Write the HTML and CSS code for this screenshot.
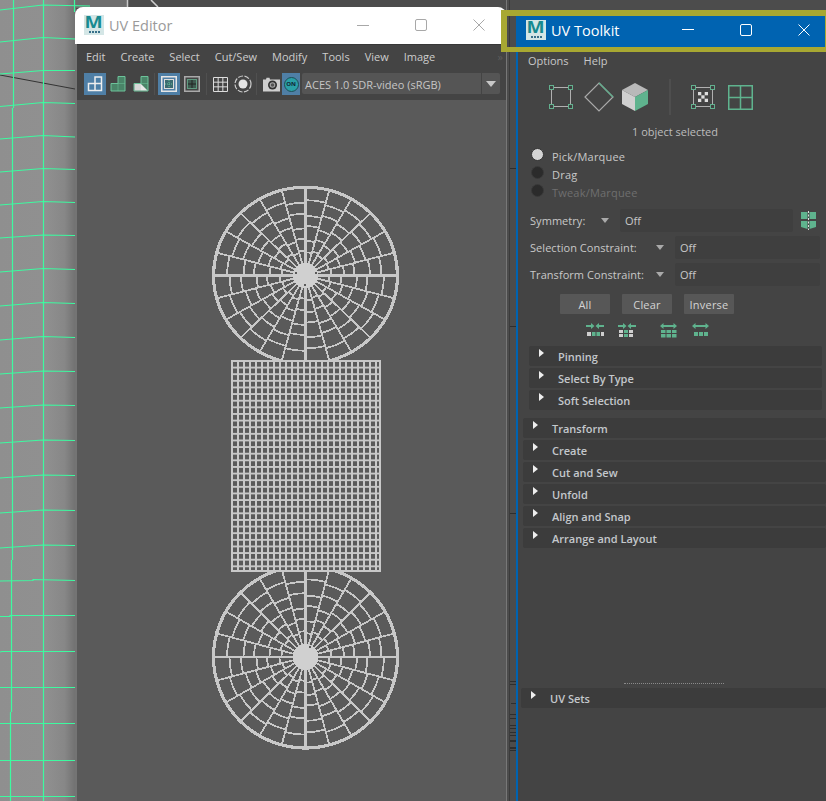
FILE: index.html
```html
<!DOCTYPE html>
<html lang="en">
<head>
<meta charset="utf-8">
<title>UV Editor and UV Toolkit</title>
<link rel="stylesheet" href="styles.css">
</head>
<body>
<div class="desk">
  <svg class="backdrop" width="826" height="801" viewBox="0 0 826 801">
    <defs>
      <linearGradient id="vp" x1="0" x2="1" y1="0" y2="0">
        <stop offset="0" stop-color="#8f8f8f"/><stop offset=".6" stop-color="#909090"/><stop offset=".85" stop-color="#878787"/><stop offset="1" stop-color="#707070"/>
      </linearGradient>
    </defs>
    <rect x="0" y="0" width="76" height="801" fill="url(#vp)"/>
    <rect x="76" y="0" width="52" height="8" fill="#6e6e6e"/>
    <path d="M127.500 0V8" stroke="#c8c8c8" stroke-width="1.500"/>
    <path d="M151 0L158 7" stroke="#d0d0d0" stroke-width="1.500"/>
    <path d="M0 75L75 89" stroke="#333" stroke-width="1"/>
    <g fill="none" stroke="#3dfaa0" stroke-width="1.200">
      <path d="M13.500 0V108M12.500 108V560M11.500 560V712M10.500 712V801M43.500 0V801M74.500 0V12"/>
      <path d="M0 10L43 5L90 6M0 42L43 37.500L75 39M0 74L43 70.500L75 70.500M0 106.500L43 102.500L75 103.500M0 139L43 135.500L75 137M0 172L43 168.500L75 169.500M0 205L43 201.500L75 202.500M0 238L43 235L75 235.500M0 272L43 268.500L75 269.500"/>
      <path d="M0 306L43 302.500L75 303.500M0 340L43 336.500L75 337.500M0 374L43 371L75 371.500M0 408L43 405L75 405.500M0 443L43 440L75 440.500M0 478L43 475L75 475.500M0 513L43 510L75 510.500M0 548L43 545L75 545.500"/>
      <path d="M0 581L33 580.500L33 579.500L75 580.500M0 616.500L10 616.500L10 615.500L75 615.500M0 652L2 651.500L75 651.500M0 687.500H75M0 723.500H75M0 760.500H75M0 796.500H75"/>
    </g>
    <rect x="506" y="0" width="1" height="801" fill="#777"/>
    <rect x="509" y="0" width="1" height="801" fill="#3a3a3a"/>
    <g fill="#2e2e2e">
      <rect x="510" y="168" width="6" height="1"/><rect x="510" y="326" width="6" height="1"/><rect x="510" y="513" width="6" height="1"/>
      <rect x="510" y="681" width="6" height="1"/><rect x="510" y="684" width="6" height="1"/><rect x="511" y="703" width="5" height="1"/><rect x="510" y="714" width="6" height="1"/><rect x="510" y="718" width="6" height="1"/><rect x="510" y="725" width="6" height="1"/><rect x="510" y="728" width="6" height="1"/><rect x="510" y="732" width="6" height="1"/><rect x="510" y="735" width="6" height="1"/><rect x="510" y="740" width="6" height="2"/><rect x="510" y="747" width="6" height="2"/><rect x="510" y="750" width="6" height="1"/>
    </g>
  </svg>

  <section class="win editor">
    <header class="title title-light">
      <div class="logo"><span class="logo-m">M</span><i class="logo-s"></i></div>
      <span class="title-text">UV Editor</span>
      <div class="controls controls-e">
        <svg class="ctl" viewBox="0 0 12 12"><path d="M0 6.500H12"/></svg>
        <svg class="ctl" viewBox="0 0 12 12"><rect x=".5" y=".5" width="11" height="11" rx="1.500"/></svg>
        <svg class="ctl" viewBox="0 0 12 12"><path d="M.5 .5L11.500 11.500M11.500 .5L.5 11.500"/></svg>
      </div>
    </header>
    <div class="ed-body">
      <nav class="ed-menu">
        <span>Edit</span><span>Create</span><span>Select</span><span>Cut/Sew</span><span>Modify</span><span>Tools</span><span>View</span><span>Image</span>
        <span class="more">»</span>
      </nav>
      <div class="ed-tools">
        <div class="tb on">
          <svg width="18" height="18" viewBox="0 0 18 18"><path d="M9 2H15.500V15.500H2.500V8.500H9Z" fill="#4b7ea6" stroke="#eee" stroke-width="1.500"/><path d="M9 8.500H15.500M9 8.500V15.500" stroke="#eee" stroke-width="1.500"/></svg>
        </div>
        <div class="tb">
          <svg width="18" height="18" viewBox="0 0 18 18"><path d="M9 1.500H16V16H2V8.500H9Z" fill="#4a8468" stroke="#6cc39a" stroke-width="1"/><path d="M9 8.500H16M9 8.500V16" stroke="#6cc39a" stroke-opacity=".5"/></svg>
        </div>
        <div class="tb">
          <svg width="18" height="18" viewBox="0 0 18 18"><path d="M9 1.500H16V16H2V8.500H9Z" fill="#4a8468" stroke="#6cc39a" stroke-width="1"/><path d="M9 8.500H16" stroke="#6cc39a" stroke-opacity=".5"/><path d="M2.500 9H9V15.500H2.500Z" fill="#d8d8d8"/><path d="M9 9L15.500 15.500H9Z" fill="#e8e8e8"/></svg>
        </div>
        <span class="sep"></span>
        <div class="tb on">
          <svg width="16" height="16" viewBox="0 0 16 16"><rect x=".75" y=".75" width="14.500" height="14.500" fill="none" stroke="#e6e6e6" stroke-width="1.500"/><rect x="3.500" y="3.500" width="9" height="9" fill="#3c6a70" stroke="#ddd"/><path d="M8 4V12M4 8H12" stroke="#66c39a" stroke-dasharray="1 1"/></svg>
        </div>
        <div class="tb">
          <svg width="16" height="16" viewBox="0 0 16 16"><rect x=".75" y=".75" width="14.500" height="14.500" fill="none" stroke="#aaa" stroke-width="1.500"/><rect x="3.500" y="3.500" width="9" height="9" fill="#3f5a50" stroke="#5f9a80"/><path d="M8 4V12M4 8H12" stroke="#222"/></svg>
        </div>
        <span class="sep sep-b"></span>
        <div class="tb">
          <svg width="15" height="15" viewBox="0 0 15 15"><path d="M.5 .5H14.500V14.500H.5ZM5.170 .5V14.500M9.830 .5V14.500M.5 5.170H14.500M.5 9.830H14.500" fill="none" stroke="#ddd"/></svg>
        </div>
        <div class="tb">
          <svg width="18" height="18" viewBox="0 0 18 18"><circle cx="9" cy="9" r="8" fill="none" stroke="#ccc" stroke-width="1.200" stroke-dasharray="5 1.500"/><circle cx="9" cy="9" r="4.500" fill="#e4e4e4"/></svg>
        </div>
        <span class="sep sep-c"></span>
        <div class="tb">
          <svg width="17" height="15" viewBox="0 0 17 15"><path d="M0 2.500H3L3.500 .8H6.500L7 2.500H17V14.500H0Z" fill="#cfcfcf"/><circle cx="9.500" cy="8" r="4.500" fill="#333"/><circle cx="9.500" cy="8" r="2.800" fill="#aaa"/><circle cx="9.500" cy="8" r="1.800" fill="#555"/></svg>
        </div>
        <div class="on-btn"><span class="on-dot">ON</span></div>
        <div class="ed-drop"><span class="ed-drop-t">ACES 1.0 SDR-video (sRGB)</span><span class="ed-drop-a"><i class="tri tri-big"></i></span></div>
      </div>
      <div class="canvas">
        <svg class="mesh" width="429" height="701" viewBox="77 100 429 701">
          <defs>
            <g id="disc">
              <g fill="none" stroke="#c8c8c8" stroke-width="1.800">
                <circle r="24" pathLength="24" stroke-dasharray="1 1"/><circle r="26" pathLength="24" stroke-dasharray="1 1" stroke-dashoffset="1"/>
                <circle r="36" pathLength="24" stroke-dasharray="1 1"/><circle r="38.500" pathLength="24" stroke-dasharray="1 1" stroke-dashoffset="1"/>
                <circle r="49" pathLength="24" stroke-dasharray="1 1" stroke-dashoffset="1"/><circle r="51.500" pathLength="24" stroke-dasharray="1 1"/>
                <circle r="62" pathLength="24" stroke-dasharray="1 1"/><circle r="64.500" pathLength="24" stroke-dasharray="1 1" stroke-dashoffset="1"/>
                <circle r="76" pathLength="24" stroke-dasharray="1 1" stroke-dashoffset="1"/><circle r="78.500" pathLength="24" stroke-dasharray="1 1"/>
                <circle r="92" stroke-width="3.200"/>
              </g>
              <g stroke="#c8c8c8" stroke-width="1.800">
                <path d="M0 -92V92" stroke-width="2.200"/><path d="M-92 0H92" stroke-width="2.200"/>
                <path d="M0 -92V92" transform="rotate(15)"/><path d="M0 -92V92" transform="rotate(30)"/><path d="M0 -92V92" transform="rotate(45)"/><path d="M0 -92V92" transform="rotate(60)"/><path d="M0 -92V92" transform="rotate(75)"/><path d="M0 -92V92" transform="rotate(105)"/><path d="M0 -92V92" transform="rotate(120)"/><path d="M0 -92V92" transform="rotate(135)"/><path d="M0 -92V92" transform="rotate(150)"/><path d="M0 -92V92" transform="rotate(165)"/>
              </g>
              <circle r="13" fill="#d0d0d0"/>
            </g>
            <pattern id="cells" x="231" y="360" width="6" height="6.625" patternUnits="userSpaceOnUse">
              <rect width="6" height="6.625" fill="#5a5a5a"/>
              <path d="M1 0V6.625M0 1H6" stroke="#c8c8c8" stroke-width="2"/>
            </pattern>
          </defs>
          <use href="#disc" transform="translate(305.500 275.500) scale(1 .96)"/>
          <use href="#disc" transform="translate(305.500 657) scale(1 .99)"/>
          <rect x="232" y="361" width="148" height="210" fill="url(#cells)" stroke="#c8c8c8" stroke-width="2"/>
          <circle cx="305" cy="285" r="1" fill="#5a5a5a"/><circle cx="296" cy="273" r="1" fill="#5a5a5a"/><circle cx="316" cy="273" r="1" fill="#5a5a5a"/>
          <circle cx="310" cy="647" r="1.200" fill="#5a5a5a"/>
        </svg>
      </div>
    </div>
  </section>

  <section class="win toolkit">
    <header class="title title-blue">
      <div class="logo"><span class="logo-m">M</span><i class="logo-s"></i></div>
      <span class="title-text">UV Toolkit</span>
      <div class="controls controls-t">
        <svg class="ctl" viewBox="0 0 12 12"><path d="M0 5.500H12"/></svg>
        <svg class="ctl" viewBox="0 0 12 12"><rect x=".5" y=".5" width="11" height="11" rx="1.500"/></svg>
        <svg class="ctl" viewBox="0 0 12 12"><path d="M.5 .5L11.500 11.500M11.500 .5L.5 11.500"/></svg>
      </div>
    </header>
    <div class="tk-body">
      <nav class="tk-menu"><span>Options</span><span>Help</span></nav>
      <div class="tk-icons">
        <svg width="24" height="24" viewBox="0 0 24 24"><path d="M5 2.500H19M5 21.500H19M2.500 5V19M21.500 5V19" stroke="#b0b0b0"/><g fill="#3f3f3f" stroke="#62b08e"><rect x=".5" y=".5" width="4" height="4"/><rect x="19.500" y=".5" width="4" height="4"/><rect x=".5" y="19.500" width="4" height="4"/><rect x="19.500" y="19.500" width="4" height="4"/></g></svg>
        <svg class="ic-dia" width="30" height="30" viewBox="0 0 30 30"><path d="M15 1L29 15L15 29L1 15Z" fill="none" stroke="#aaa" stroke-width="1.200"/><path d="M15 1L29 15" stroke="#62b08e" stroke-width="1.200"/></svg>
        <svg class="ic-cube" width="28" height="30" viewBox="0 0 28 30"><path d="M14 1L27 8L14 15L1 8Z" fill="#b9b9b9"/><path d="M1 8L14 15V29L1 22Z" fill="#d0d0d0"/><path d="M27 8L14 15V29L27 22Z" fill="#5fb38e"/></svg>
        <span class="tk-vsep"></span>
        <svg class="ic-uv" width="24" height="24" viewBox="0 0 24 24"><path d="M5 2.500H19M5 21.500H19M2.500 5V19M21.500 5V19" stroke="#b0b0b0"/><g fill="#3f3f3f" stroke="#62b08e"><rect x=".5" y=".5" width="4" height="4"/><rect x="19.500" y=".5" width="4" height="4"/><rect x=".5" y="19.500" width="4" height="4"/><rect x="19.500" y="19.500" width="4" height="4"/></g><g fill="#ddd"><rect x="7" y="7" width="3.300" height="3.300"/><rect x="13.700" y="7" width="3.300" height="3.300"/><rect x="10.300" y="10.300" width="3.300" height="3.300"/><rect x="7" y="13.700" width="3.300" height="3.300"/><rect x="13.700" y="13.700" width="3.300" height="3.300"/></g></svg>
        <svg class="ic-grid" width="25" height="25" viewBox="0 0 25 25"><path d="M.75 .75H24.250V24.250H.75ZM12.500 .75V24.250M.75 12.500H24.250" fill="none" stroke="#5fb38e" stroke-width="1.500"/></svg>
      </div>
      <p class="tk-status">1 object selected</p>
      <div class="radios">
        <label class="radio"><i class="dot dot-on"></i><span>Pick/Marquee</span></label>
        <label class="radio"><i class="dot"></i><span>Drag</span></label>
        <label class="radio radio-off"><i class="dot"></i><span>Tweak/Marquee</span></label>
      </div>
      <div class="frow frow-first">
        <span class="lbl lbl-s">Symmetry:</span><i class="tri"></i>
        <span class="field field-s">Off</span>
        <svg class="sym" width="17" height="19" viewBox="0 0 17 19"><path d="M1 1H7.500V8H1ZM9.500 1H16V8H9.500ZM1 10H7.500V18L1 16ZM9.500 10H16V16L9.500 18Z" fill="#5fb38e"/><path d="M8.500 0V19" stroke="#ddd" stroke-dasharray="2 1.500"/></svg>
      </div>
      <div class="frow">
        <span class="lbl lbl-c">Selection Constraint:</span><i class="tri"></i>
        <span class="field field-c">Off</span>
      </div>
      <div class="frow">
        <span class="lbl lbl-c">Transform Constraint:</span><i class="tri"></i>
        <span class="field field-c">Off</span>
      </div>
      <div class="btns"><button class="btn">All</button><button class="btn">Clear</button><button class="btn">Inverse</button></div>
      <svg class="mini" width="124" height="15" viewBox="0 0 124 15">
        <g fill="#5fb38e">
          <path d="M0 2H5V0L8.500 3L5 6V4H0ZM18 2H13V0L9.500 3L13 6V4H18Z"/>
          <rect x="6" y="9" width="3.500" height="4"/><rect x="10.500" y="9" width="3.500" height="4"/>
          <path d="M32 2H37V0L40.500 3L37 6V4H32ZM50 2H45V0L41.500 3L45 6V4H50Z"/>
          <rect x="38" y="7" width="4" height="3"/><rect x="38" y="11" width="4" height="3"/>
          <path d="M74 3L77.500 0V2H87.500V0L91 3L87.500 6V4H77.500V6Z"/>
          <rect x="75" y="7" width="4.500" height="3"/><rect x="80.500" y="7" width="4.500" height="3"/><rect x="86" y="7" width="4.500" height="3"/><rect x="75" y="11" width="4.500" height="3.500"/><rect x="80.500" y="11" width="4.500" height="3.500"/><rect x="86" y="11" width="4.500" height="3.500"/>
          <path d="M106 3L109.500 0V2H119.500V0L123 3L119.500 6V4H109.500V6Z"/>
          <rect x="108" y="9" width="4" height="4"/><rect x="113" y="9" width="4" height="4"/><rect x="118" y="9" width="4" height="4"/>
        </g>
        <g fill="#cfcfcf">
          <rect x="1" y="9" width="4" height="4"/><rect x="15" y="9" width="3" height="4"/>
          <rect x="33" y="7" width="4" height="3"/><rect x="33" y="11" width="4" height="3"/><rect x="43" y="7" width="4" height="3"/><rect x="43" y="11" width="4" height="3"/>
        </g>
      </svg>
      <div class="secs secs-in">
        <div class="sec"><i class="arr"></i><span>Pinning</span></div>
        <div class="sec"><i class="arr"></i><span>Select By Type</span></div>
        <div class="sec"><i class="arr"></i><span>Soft Selection</span></div>
      </div>
      <div class="secs secs-out">
        <div class="sec"><i class="arr"></i><span>Transform</span></div>
        <div class="sec"><i class="arr"></i><span>Create</span></div>
        <div class="sec"><i class="arr"></i><span>Cut and Sew</span></div>
        <div class="sec"><i class="arr"></i><span>Unfold</span></div>
        <div class="sec"><i class="arr"></i><span>Align and Snap</span></div>
        <div class="sec"><i class="arr"></i><span>Arrange and Layout</span></div>
      </div>
      <div class="grip"></div>
      <div class="secs secs-uv">
        <div class="sec"><i class="arr"></i><span>UV Sets</span></div>
      </div>
    </div>
  </section>

  <div class="olive"></div>
</div>
</body>
</html>
```

FILE: styles.css
```css
* { box-sizing: border-box; }
html, body { margin: 0; padding: 0; }
body { font-family: "Open Sans", "Liberation Sans", sans-serif; font-size: 11px; color: #c8c8c8; }
.desk { position: relative; width: 826px; height: 801px; overflow: hidden; background: #4c4c4c; }
.backdrop { position: absolute; left: 0; top: 0; }

.win { position: absolute; display: flex; flex-direction: column; }
.editor { left: 75px; top: 7px; width: 431px; height: 794px; }
.toolkit { left: 516px; top: 16px; width: 310px; height: 785px; }

.title { display: flex; align-items: center; flex: none; }
.title-light { height: 37px; padding: 0 0 1px 9px; background: #fff; border-radius: 8px 8px 0 0; color: #9a9a9a; }
.title-blue { height: 31px; padding: 0 0 3px 10px; background: #0063b1; color: #fff; }
.title-text { font-size: 14.500px; margin-left: 5px; }
.logo { width: 20px; height: 20px; padding-bottom: 2px; background: #d4e6e6; display: flex; flex-direction: column; align-items: center; flex: none; }
.logo-m { font-size: 16px; line-height: 15px; height: 15px; font-weight: 700; color: #178a90; transform: scaleX(1.200); }
.logo-s { display: block; width: 11px; height: 2px; margin-top: 1px; background: repeating-linear-gradient(90deg, #37708a 0 2px, #d4e6e6 2px 3px); }
.controls { margin-left: auto; display: flex; }
.controls-e { padding-right: 21px; gap: 46px; color: #a8a8a8; }
.controls-t { padding-right: 16px; gap: 46px; color: #fff; }
.ctl { width: 12px; height: 12px; fill: none; stroke: currentColor; stroke-width: 1; overflow: visible; }

.ed-body { flex: 1; display: flex; flex-direction: column; border-left: 2px solid #747474; background: #444; min-height: 0; }
.ed-menu { height: 24px; flex: none; display: flex; align-items: center; gap: 15px; padding-left: 9px; border-top: 1px solid #383838; color: #cdcdcd; }
.more { margin-left: auto; margin-right: 3px; color: #5c5c5c; }
.ed-tools { height: 32px; flex: none; display: flex; align-items: flex-start; padding: 5px 0 0 7px; }
.tb { width: 22px; height: 22px; margin-right: 1px; display: flex; align-items: center; justify-content: center; flex: none; }
.tb.on { background: #4f7fa6; }
.sep { width: 1px; height: 22px; background: #505050; margin: 0 3px 0 1px; flex: none; }
.sep-b { margin: 0 2px 0 2px; }
.sep-c { margin: 0 3px 0 1px; }
.on-btn { width: 18px; height: 22px; background: #4f7fa6; display: flex; align-items: center; justify-content: center; margin-left: -1px; flex: none; }
.on-dot { width: 15px; height: 15px; border-radius: 50%; background: #2aa0a6; border: 1px solid #1e4e55; color: #123; font-size: 6px; font-weight: 700; line-height: 13px; text-align: center; }
.ed-drop { width: 198px; height: 21px; margin-left: 2px; background: #555; border-radius: 2px; display: flex; align-items: center; flex: none; }
.ed-drop-t { flex: 1; padding: 2px 0 0 3px; color: #c6c6c6; font-size: 11px; }
.ed-drop-a { width: 19px; height: 21px; border-left: 1px solid #444; display: flex; align-items: center; justify-content: center; }
.canvas { flex: 1; background: #5a5a5a; min-height: 0; }
.mesh { display: block; shape-rendering: crispEdges; }

.tri { display: block; width: 0; height: 0; border-left: 4px solid transparent; border-right: 4px solid transparent; border-top: 5px solid #aaa; flex: none; margin: 0 1px; }
.tri-big { border-left-width: 5px; border-right-width: 5px; border-top-width: 6px; border-top-color: #c8c8c8; }

.tk-body { flex: 1; display: flex; flex-direction: column; border-left: 2px solid #0063b1; background: #444; min-height: 0; }
.tk-menu { height: 27px; flex: none; display: flex; align-items: center; gap: 15px; padding-left: 10px; }
.tk-icons { height: 46px; flex: none; display: flex; align-items: center; padding-left: 31px; }
.ic-dia { margin-left: 11px; }
.ic-cube { margin-left: 7px; }
.tk-vsep { width: 2px; height: 36px; background: #4e4e4e; margin: 0 20px 0 20px; flex: none; }
.ic-grid { margin-left: 13px; }
.tk-status { margin: 0; height: 25px; flex: none; line-height: 24px; text-align: center; padding-left: 6px; color: #bdbdbd; }
.radios { flex: none; }
.radio { display: flex; align-items: center; height: 18px; padding-left: 13px; gap: 8px; letter-spacing: .2px; }
.radio span { position: relative; top: 2px; }
.radio-off { color: #6f6f6f; }
.dot { width: 13px; height: 13px; border-radius: 50%; background: #2b2b2b; border: 1px solid #3a3a3a; flex: none; }
.dot-on { background: #d4d4d4; border-color: #333; }

.frow { display: flex; align-items: center; height: 23px; margin-top: 4px; padding-left: 12px; flex: none; letter-spacing: .05px; }
.frow-first { margin-top: 10px; }
.lbl { flex: none; }
.lbl-s { width: 70px; }
.lbl-c { width: 125px; }
.frow .tri { margin: 0 11px 0 1px; }
.field { height: 23px; background: #3f3f3f; border-radius: 2px; padding-left: 5px; line-height: 23px; flex: none; }
.field-s { width: 173px; }
.field-c { width: 145px; }
.sym { margin-left: 7px; flex: none; }
.btns { display: flex; gap: 12px; padding-left: 42px; margin-top: 8px; flex: none; }
.btn { width: 50px; height: 20px; padding: 0; border: 0; border-radius: 1px; background: #575757; color: #d4d4d4; font: inherit; letter-spacing: .2px; }
.mini { display: block; margin: 9px 0 0 68px; flex: none; }
.secs { display: flex; flex-direction: column; gap: 2px; flex: none; }
.secs-in { margin: 8px 4px 0 11px; }
.secs-out { margin: 8px 0 0 5px; }
.secs-uv { margin: 4px 0 0 3px; }
.sec { height: 20px; display: flex; align-items: center; background: #3c3c3c; border-radius: 2px; padding-left: 10px; font-weight: 600; color: #c4c8cc; }
.sec span { margin-left: 14px; }
.arr { width: 0; height: 0; border-top: 4.500px solid transparent; border-bottom: 4.500px solid transparent; border-left: 5px solid #eee; position: relative; top: -3px; flex: none; }
.grip { width: 100px; height: 0; border-top: 1px dotted #8a8a8a; margin: 135px 0 0 106px; flex: none; }

.olive { position: absolute; left: 501px; top: 10px; width: 330px; height: 42px; border: 6px solid #a8a832; border-bottom-width: 5px; }
```
